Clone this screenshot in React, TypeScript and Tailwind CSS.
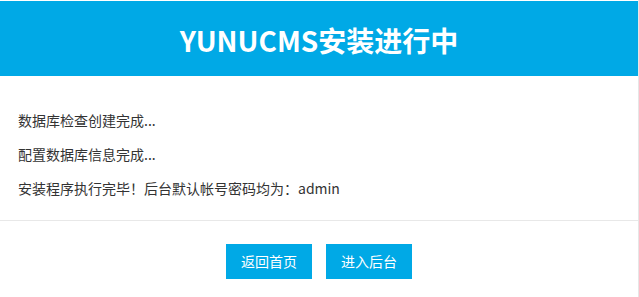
import React from 'react';

const font = { fontFamily: '"Noto Sans CJK SC", "Noto Sans", sans-serif' };

const lines = [
  '数据库检查创建完成...',
  '配置数据库信息完成...',
  '安装程序执行完毕！后台默认帐号密码均为：admin',
];

export default function App() {
  return (
    <div className="w-[639px] h-[297px] bg-white pt-px border-r border-[#e6e6e6]" style={font}>
      <div className="h-[75px] bg-[#00a9e6] flex items-center justify-center pt-[3px]">
        <h1 className="text-[28px] font-bold text-white leading-none">YUNUCMS安装进行中</h1>
      </div>
      <div className="pt-[34px] pb-[22px] px-[18px] space-y-[14px]">
        {lines.map((line) => (
          <p key={line} className="text-[14px] leading-[20px] text-[#333333]">{line}</p>
        ))}
      </div>
      <div className="border-t border-[#e8e8e8] pt-[23px] flex justify-center gap-[14px]">
        <button className="w-[86px] h-[35px] bg-[#00a9e6] text-white text-[14px]">返回首页</button>
        <button className="w-[86px] h-[35px] bg-[#00a9e6] text-white text-[14px]">进入后台</button>
      </div>
    </div>
  );
}
